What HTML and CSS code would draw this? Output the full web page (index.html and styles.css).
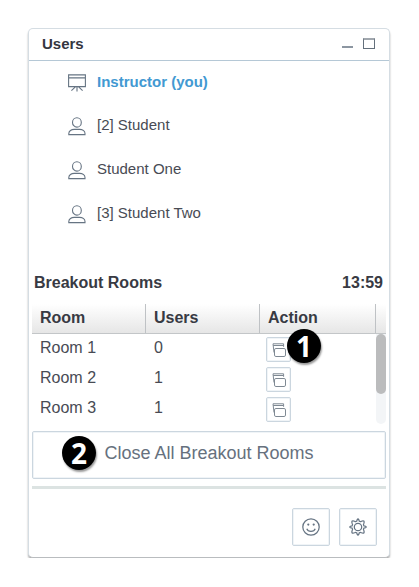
FILE: index.html
```html
<!DOCTYPE html>
<html lang="en">
<head>
<meta charset="utf-8">
<title>Users</title>
<link rel="stylesheet" href="styles.css">
</head>
<body>
<svg class="defs" aria-hidden="true">
  <symbol id="person" viewBox="0 0 18 20"><ellipse cx="8.9" cy="6.4" rx="4.4" ry="4.7"/><path d="M.8 18.6v-1c0-2.5 2.6-4.2 5.4-4.2h5.4c2.8 0 5.4 1.7 5.4 4.2v1z"/></symbol>
  <symbol id="windows" viewBox="0 0 14 14"><path d="M2 9.5L1 .8h10.6v3M1.2 2.5h10.4"/><rect x="2.5" y="5.5" width="11" height="8" rx="1.4"/></symbol>
</svg>
<main class="panel">
  <header class="titlebar">
    <h1>Users</h1>
    <span class="minimize"></span><span class="maximize"></span>
  </header>
  <ul class="users">
    <li class="me"><svg class="icon board" viewBox="0 0 18 18"><path d="M.6.9h16.8v11.7H.6zM.6 3.9h16.8M9 12.6v4.9M7.4 12.8l-4 3.9M10.6 12.8l4 3.9"/></svg>Instructor (you)</li>
    <li><svg class="icon"><use href="#person"/></svg>[2] Student</li>
    <li><svg class="icon"><use href="#person"/></svg>Student One</li>
    <li><svg class="icon"><use href="#person"/></svg>[3] Student Two</li>
  </ul>
  <section class="breakout">
    <div class="heading"><h2>Breakout Rooms</h2><span>13:59</span></div>
    <div class="row head"><span>Room</span><span>Users</span><span>Action</span><span></span></div>
    <div class="body">
      <div class="rows">
        <div class="row"><span>Room 1</span><span>0</span><span class="action"><button><svg><use href="#windows"/></svg></button><b class="badge one">1</b></span></div>
        <div class="row"><span>Room 2</span><span>1</span><span class="action"><button><svg><use href="#windows"/></svg></button></span></div>
        <div class="row"><span>Room 3</span><span>1</span><span class="action"><button><svg><use href="#windows"/></svg></button></span></div>
      </div>
      <div class="scroll"><div class="thumb"></div></div>
    </div>
    <button class="close">Close All Breakout Rooms<b class="badge two">2</b></button>
  </section>
  <footer>
    <button><svg viewBox="0 0 18 18"><circle cx="9" cy="9" r="8.2"/><path d="M4.8 10.7c1.2 3.5 7.2 3.5 8.4 0"/><circle class="dot" cx="6.3" cy="6.6" r="1.1"/><circle class="dot" cx="11.7" cy="6.6" r="1.1"/></svg></button>
    <button><svg viewBox="0 0 18 18"><circle cx="9" cy="9" r="3.7"/><path d="M9 .7Q10 1.2 10.2 3.1Q11.3 4 12.4 3.2Q14 2.5 14.9 3.1Q15.5 4 14.8 5.6Q14 6.7 14.9 7.8Q16.8 8 17.3 9Q16.8 10 14.9 10.2Q14 11.3 14.8 12.4Q15.5 14 14.9 14.9Q14 15.5 12.4 14.8Q11.3 14 10.2 14.9Q10 16.8 9 17.3Q8 16.8 7.8 14.9Q6.7 14 5.6 14.8Q4 15.5 3.1 14.9Q2.5 14 3.2 12.4Q4 11.3 3.1 10.2Q1.2 10 .7 9Q1.2 8 3.1 7.8Q4 6.7 3.2 5.6Q2.5 4 3.1 3.1Q4 2.5 5.6 3.2Q6.7 4 7.8 3.1Q8 1.2 9 .7z"/></svg></button>
  </footer>
</main>
</body>
</html>
```
FILE: styles.css
```css
* { box-sizing: border-box; }
body { margin: 0; padding: 28px 0 0 28px; background: #fff; font-family: "Liberation Sans", Arial, sans-serif; color: #484b54; }
h1, h2, ul { margin: 0; padding: 0; list-style: none; }
svg { display: block; fill: none; stroke: #667483; stroke-width: 1.1; }
.defs { position: absolute; width: 0; height: 0; }
button { display: flex; align-items: center; justify-content: center; padding: 0; background: #fff; border: 1px solid #cbd6df; border-radius: 2px; box-shadow: inset 0 0 0 1px #f0f4f7; font-family: inherit; }

.panel { width: 362px; height: 530px; border: 1px solid #d5dde3; border-bottom-color: #b9bcbf; border-radius: 5px; background: #fff; box-shadow: 0 2px 2px rgba(0,0,0,.32); }
.titlebar { display: flex; height: 32px; padding: 0 14px 0 13px; border-bottom: 1px solid #b5c8d6; }
.titlebar h1 { flex: 1; font-size: 15px; line-height: 30px; color: #34363f; }
.minimize { width: 11px; height: 2px; margin: 17px 10px 0 0; background: #8c96a1; }
.maximize { width: 12px; height: 11px; margin-top: 9px; border: 1px solid #64707c; border-top: 2px solid #a1a7ae; }

.users { height: 206px; }
.users li { display: flex; align-items: center; height: 44px; padding-left: 39px; font-size: 15px; }
.users li.me { height: 40px; margin-bottom: 1px; font-weight: bold; color: #4299d2; }
.icon { width: 18px; height: 20px; margin: 3px 11px 0 0; }
.icon.board { height: 18px; margin-top: 4px; }

.breakout { padding: 0 3px; }
.heading { display: flex; justify-content: space-between; height: 37px; padding: 0 3px 0 2px; font-size: 16px; font-weight: bold; line-height: 32px; color: #383a43; }
.heading h2 { font-size: 16px; }
.row { display: grid; grid-template-columns: 113px 114px 117px; height: 30px; font-size: 16px; line-height: 28px; }
.row > span { padding-left: 8px; }
.row.head { grid-template-columns: 113px 114px 116px 11px; line-height: 28px; font-weight: bold; color: #383a43; background: linear-gradient(#fff, #e6e6e6); border-bottom: 1px solid #c3c6c8; }
.head > span + span { border-left: 1px solid #bfc2c5; }
.body { display: flex; height: 90px; }
.rows { width: 344px; }
.rows .row > span + span { padding-left: 9px; }
.rows .row > .action { position: relative; padding: 3px 0 0 7px; }
.action button { width: 25px; height: 25px; }
.action svg { width: 14px; height: 14px; stroke: #7f8993; stroke-width: 1; }
.scroll { width: 10px; border-radius: 0 0 5px 5px; background: #f3f5f7; }
.thumb { height: 60px; border-radius: 5px; background: #bbbcbd; }
.close { position: relative; width: 354px; height: 48px; margin-top: 7px; padding: 0 0 4px; font-size: 18px; color: #66717e; }

.badge { position: absolute; display: flex; align-items: center; justify-content: center; width: 34px; height: 34px; border-radius: 50%; background: #000; color: #fff; font: 700 28px/34px "Open Sans", sans-serif; box-shadow: 1px 2px 2px rgba(0,0,0,.4); }
.badge.one { left: 28px; top: -5px; }
.badge.two { left: 29px; top: 4px; }

footer { display: flex; justify-content: flex-end; gap: 9px; margin: 7px 3px 0; padding: 19px 9px 0 0; border-top: 3px solid #dce3e2; }
footer button { width: 38px; height: 38px; }
footer svg { width: 18px; height: 18px; stroke-width: 1.25; }
.dot { fill: #667483; stroke: none; }
```
